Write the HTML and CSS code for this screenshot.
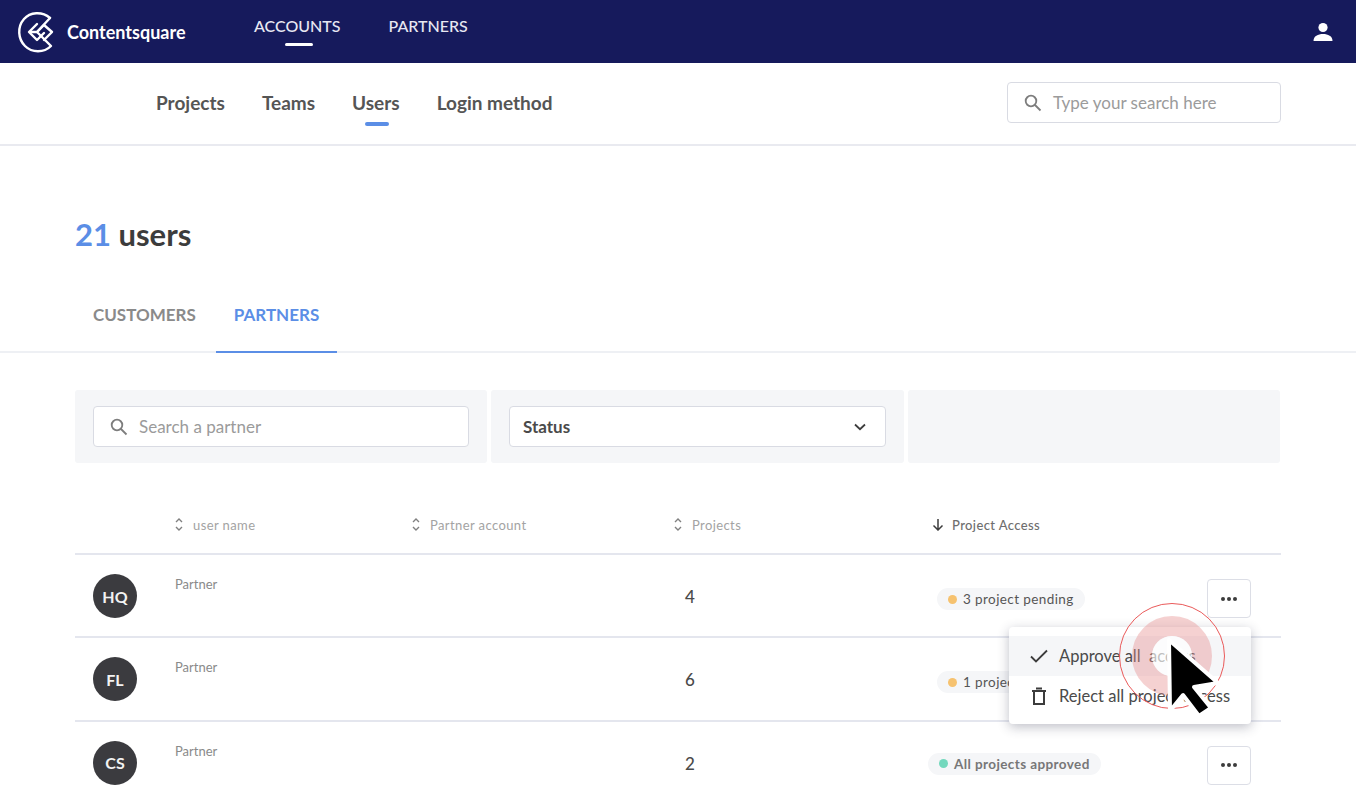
FILE: index.html
```html
<!DOCTYPE html>
<html lang="en">
    <head>
        <meta charset="UTF-8">
        <meta name="viewport" content="width=device-width, initial-scale=1.0">
        <title>Users</title>
        <link rel="stylesheet" href="styles.css">
    </head>
    <body>
        <header class="topbar">
            <a class="logo">
                <svg width="44" height="44" viewBox="0 0 44 44" fill="none" stroke="#fff" stroke-width="2.4" stroke-linejoin="round" stroke-linecap="round">
                    <path d="M33 8 C25 1 13 2 7 9 C0 17 1 29 8 36 C15 43 27 43 34 36 L20 22 L27 15 L35 22 L27 30"/>
                    <path d="M33 8 L20 22 L14 22"/>
                    <path d="M20 14 L12 22 L20 30 L27 23"/>
                </svg>
                <span class="logo-name">Contentsquare</span>
            </a>
            <nav class="topnav">
                <a class="topnav-item active">ACCOUNTS</a>
                <a class="topnav-item">PARTNERS</a>
            </nav>
            <svg class="user-icon" width="22" height="22" viewBox="0 0 22 22" fill="#fff">
                <circle cx="11" cy="6.5" r="4.6"/>
                <path d="M1.5 20 C1.5 15 6 13 11 13 C16 13 20.500 15 20.500 20 Z"/>
            </svg>
        </header>

        <section class="subnav">
            <nav class="subnav-links">
                <a class="subnav-item">Projects</a>
                <a class="subnav-item">Teams</a>
                <a class="subnav-item active">Users</a>
                <a class="subnav-item">Login method</a>
            </nav>
            <div class="search-box top-search">
                <svg class="search-icon" width="18" height="18" viewBox="0 0 18 18" fill="none" stroke="#7d7d7d" stroke-width="1.8"><circle cx="7" cy="7" r="5.3"/><path d="M11 11 L16.500 16.500"/></svg>
                <span class="placeholder">Type your search here</span>
            </div>
        </section>

        <h1 class="page-title"><span class="count">21</span> users</h1>

        <nav class="tabs">
            <a class="tab">CUSTOMERS</a>
            <a class="tab active">PARTNERS</a>
        </nav>

        <section class="filters">
            <div class="filter-cell">
                <div class="search-box">
                    <svg class="search-icon" width="18" height="18" viewBox="0 0 18 18" fill="none" stroke="#7d7d7d" stroke-width="1.8"><circle cx="7" cy="7" r="5.3"/><path d="M11 11 L16.500 16.500"/></svg>
                    <span class="placeholder">Search a partner</span>
                </div>
            </div>
            <div class="filter-cell">
                <div class="select-box">
                    <span>Status</span>
                    <svg width="12" height="8" viewBox="0 0 12 8" fill="none" stroke="#3c3c3c" stroke-width="1.8"><path d="M1 1.500 L6 6.200 L11 1.500"/></svg>
                </div>
            </div>
            <div class="filter-cell"></div>
        </section>

        <section class="table">
            <div class="table-head">
                <span></span>
                <span class="th"><svg class="sort" width="8" height="15" viewBox="0 0 8 15" fill="none" stroke="#808080" stroke-width="1.400"><path d="M1 5 L4 2 L7 5 M1 10 L4 13 L7 10"/></svg>user name</span>
                <span class="th"><svg class="sort" width="8" height="15" viewBox="0 0 8 15" fill="none" stroke="#808080" stroke-width="1.400"><path d="M1 5 L4 2 L7 5 M1 10 L4 13 L7 10"/></svg>Partner account</span>
                <span class="th"><svg class="sort" width="8" height="15" viewBox="0 0 8 15" fill="none" stroke="#808080" stroke-width="1.400"><path d="M1 5 L4 2 L7 5 M1 10 L4 13 L7 10"/></svg>Projects</span>
                <span class="th th-sorted"><svg class="sort" width="12" height="13" viewBox="0 0 12 13" fill="none" stroke="#3c3c3c" stroke-width="1.500"><path d="M6 1 L6 12 M1.500 7.500 L6 12 L10.500 7.500"/></svg>Project Access</span>
            </div>

            <div class="row">
                <span class="avatar">HQ</span>
                <span class="role">Partner</span>
                <span></span>
                <span class="num">4</span>
                <span class="badge"><i class="dot pending"></i>3 project pending</span>
                <button class="more"><i></i><i></i><i></i></button>
            </div>
            <div class="row">
                <span class="avatar">FL</span>
                <span class="role">Partner</span>
                <span></span>
                <span class="num">6</span>
                <span class="badge"><i class="dot pending"></i>1 project pending</span>
                <button class="more"><i></i><i></i><i></i></button>
            </div>
            <div class="row">
                <span class="avatar">CS</span>
                <span class="role">Partner</span>
                <span></span>
                <span class="num">2</span>
                <span class="badge badge-ok"><i class="dot approved"></i>All projects approved</span>
                <button class="more"><i></i><i></i><i></i></button>
            </div>
        </section>

        <!-- menu + click marker float over the table -->
        <div class="menu">
            <div class="menu-item hover">
                <svg width="18" height="14" viewBox="0 0 18 14" fill="none" stroke="#3c3c3c" stroke-width="1.800"><path d="M1 7.500 L6 12.500 L17 1.500"/></svg>
                Approve all&nbsp; access
            </div>
            <div class="menu-item">
                <svg width="18" height="18" viewBox="0 0 18 18" fill="none" stroke="#3c3c3c" stroke-width="2"><path d="M2 4 L16 4 M6 1.500 L12 1.500 M4 4 L4 17 L14 17 L14 4"/></svg>
                Reject all project access
            </div>
        </div>
        <svg class="click-mark" width="130" height="130" viewBox="0 0 130 130">
            <circle cx="65" cy="65" r="30" fill="none" stroke="#e58b8b" stroke-opacity="0.4" stroke-width="20"/>
            <circle cx="65" cy="65" r="20" fill="#fff" fill-opacity="0.65"/>
            <circle cx="65" cy="65" r="52.500" fill="none" stroke="#ea5a5a" stroke-width="1"/>
            <path d="M62 49 L111 92 L87 96 L104 117 L92 125 L76 104 L63 120 Z" fill="#000" stroke="#fff" stroke-width="4" stroke-linejoin="round"/>
        </svg>
    </body>
</html>
```

FILE: styles.css
```css
* {
    padding: 0;
    margin: 0;
    box-sizing: border-box;
}

html {
    height: 800px;
    overflow: hidden;
}

body {
    position: relative;
    background-color: #fff;
    color: #4a4a4a;
    font-family: "Lato", "Liberation Sans", sans-serif;
}

/* top bar */
.topbar {
    display: flex;
    align-items: center;
    height: 63px;
    padding: 0 22px 0 17px;
    background-color: #161a5c;
}

.logo {
    display: flex;
    align-items: center;
    gap: 6px;
    width: 237px;
}

.logo-name {
    color: #fff;
    font-size: 18px;
    font-weight: 700;
}

.topnav {
    display: flex;
    gap: 48px;
    height: 100%;
}

.topnav-item {
    position: relative;
    padding-top: 16px;
    color: #e8e8f2;
    font-size: 16px;
    font-weight: 500;
}

.topnav-item.active::after {
    content: "";
    position: absolute;
    left: 31px;
    bottom: 17px;
    width: 28px;
    height: 3px;
    border-radius: 2px;
    background-color: #fff;
}

.user-icon {
    margin-left: auto;
}

/* second row */
.subnav {
    display: flex;
    align-items: center;
    justify-content: space-between;
    height: 83px;
    padding: 0 75px 2px 156px;
    border-bottom: 2px solid #e9eaf0;
}

.subnav-links {
    display: flex;
    gap: 37px;
}

.subnav-item {
    position: relative;
    font-size: 19px;
    font-weight: 700;
    color: #555;
}

.subnav-item.active::after {
    content: "";
    position: absolute;
    left: 13px;
    bottom: -12px;
    width: 24px;
    height: 4px;
    border-radius: 2px;
    background-color: #5b8ee6;
}

.search-box {
    display: flex;
    align-items: center;
    gap: 11px;
    height: 41px;
    padding-left: 16px;
    background-color: #fff;
    border: 1px solid #d9dbe3;
    border-radius: 4px;
}

.top-search {
    width: 274px;
}

.placeholder {
    font-size: 17px;
    color: #9b9b9b;
}

/* heading + tabs */
.page-title {
    padding: 69px 0 0 75px;
    font-size: 31px;
    font-weight: 700;
    line-height: 38px;
    color: #3c3c3c;
}

.count {
    color: #5b8ee6;
}

.tabs {
    display: flex;
    height: 68px;
    margin-top: 32px;
    padding-left: 75px;
    border-bottom: 2px solid #eef0f4;
}

.tab {
    height: 68px;
    padding: 19px 18px 0;
    font-size: 17px;
    font-weight: 700;
    color: #8a8a8a;
}

.tab.active {
    margin-left: 2px;
    color: #5b8ee6;
    border-bottom: 2px solid #5b8ee6;
}

/* filter strip */
.filters {
    display: grid;
    grid-template-columns: 412px 413px 372px;
    gap: 4px;
    margin: 37px 75px 0;
}

.filter-cell {
    height: 73px;
    padding: 16px 18px;
    background-color: #f5f6f8;
    border-radius: 3px;
}

.select-box {
    display: flex;
    align-items: center;
    justify-content: space-between;
    height: 41px;
    padding: 0 19px 0 13px;
    font-size: 17px;
    font-weight: 700;
    background-color: #fff;
    border: 1px solid #d9dbe3;
    border-radius: 4px;
}

/* table */
.table {
    margin: 37px 75px 0;
}

.table-head,
.row {
    display: grid;
    grid-template-columns: 100px 237px 262px 247px 274px 1fr;
    border-bottom: 2px solid #e4e6ee;
}

.table-head {
    height: 55px;
    align-items: center;
    padding-bottom: 4px;
    grid-template-columns: 100px 237px 262px 258px 1fr;
}

.th {
    display: flex;
    align-items: center;
    gap: 10px;
    font-size: 13px;
    letter-spacing: 0.4px;
    color: #a3a3a3;
}

.th-sorted {
    gap: 8px;
    color: #6e6e6e;
    font-weight: 500;
}

.row {
    position: relative;
    height: 83.4px;
    align-items: start;
}

.avatar {
    display: flex;
    align-items: center;
    justify-content: center;
    width: 44px;
    height: 44px;
    margin: 19px 0 0 18px;
    border-radius: 50%;
    background-color: #3b3b3f;
    color: #f2f2f2;
    font-size: 16px;
    font-weight: 700;
}

.role {
    margin-top: 21px;
    font-size: 13px;
    color: #8a8a8a;
}

.num {
    margin: 31px 0 0 11px;
    font-size: 17px;
    font-weight: 500;
}

.badge {
    display: inline-flex;
    align-items: center;
    justify-self: start;
    gap: 6px;
    height: 22px;
    margin: 33px 0 0 16px;
    padding: 0 11px;
    border-radius: 11px;
    background-color: #f5f6f8;
    font-size: 13.500px;
    letter-spacing: 0.4px;
    white-space: nowrap;
    color: #555;
}

.badge-ok {
    margin: 31px 0 0 7px;
    font-weight: 700;
    color: #777;
}

.dot {
    width: 9px;
    height: 9px;
    border-radius: 50%;
}

.pending {
    background-color: #f6c26f;
}

.approved {
    background-color: #73d8bd;
}

.more {
    position: absolute;
    left: 1132px;
    top: 24px;
    display: flex;
    align-items: center;
    justify-content: center;
    gap: 2px;
    width: 44px;
    height: 39px;
    background-color: #fff;
    border: 1px solid #dcdee6;
    border-radius: 4px;
}

.more i {
    width: 4px;
    height: 4px;
    border-radius: 50%;
    background-color: #3c3c3c;
}

/* floating menu */
.menu {
    position: absolute;
    left: 1009px;
    top: 627px;
    width: 242px;
    height: 97px;
    padding-top: 9px;
    background-color: #fff;
    border-radius: 4px;
    box-shadow: 0 3px 12px rgba(40, 44, 70, 0.3);
}

.menu-item {
    display: flex;
    align-items: center;
    gap: 11px;
    height: 40px;
    padding-left: 21px;
    font-size: 16.500px;
    white-space: nowrap;
    color: #4a4a4a;
}

.menu-item.hover {
    background-color: #f5f6f8;
}

.click-mark {
    position: absolute;
    left: 1107px;
    top: 591px;
}
```
